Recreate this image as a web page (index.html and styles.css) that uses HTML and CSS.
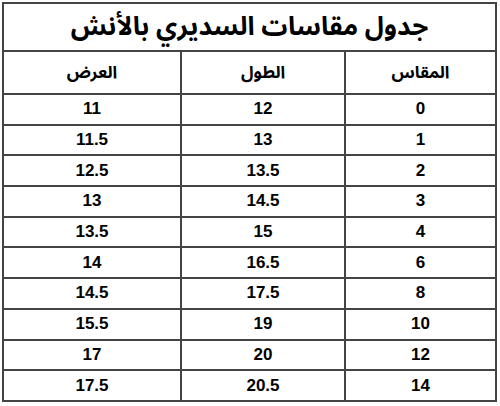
FILE: index.html
```html
<!DOCTYPE html>
<html lang="ar" dir="rtl">
<head>
<meta charset="utf-8">
<link rel="stylesheet" href="styles.css">
</head>
<body>
<table class="sizes">
  <colgroup>
    <col class="c-size">
    <col class="c-len">
    <col class="c-wid">
  </colgroup>
  <tr class="title-row"><th colspan="3">جدول مقاسات السديري بالأنش</th></tr>
  <tr class="head-row"><th>المقاس</th><th>الطول</th><th>العرض</th></tr>
  <tr><td>0</td><td>12</td><td>11</td></tr>
  <tr><td>1</td><td>13</td><td>11.5</td></tr>
  <tr><td>2</td><td>13.5</td><td>12.5</td></tr>
  <tr><td>3</td><td>14.5</td><td>13</td></tr>
  <tr><td>4</td><td>15</td><td>13.5</td></tr>
  <tr><td>6</td><td>16.5</td><td>14</td></tr>
  <tr><td>8</td><td>17.5</td><td>14.5</td></tr>
  <tr><td>10</td><td>19</td><td>15.5</td></tr>
  <tr><td>12</td><td>20</td><td>17</td></tr>
  <tr><td>14</td><td>20.5</td><td>17.5</td></tr>
</table>
</body>
</html>
```
FILE: styles.css
```css
html, body {
  margin: 0;
  padding: 0;
  background: #ffffff;
}
body {
  padding: 2px 3px 0 4px;
  font-family: "Liberation Sans", "Noto Sans Arabic", "DejaVu Sans", Arial, sans-serif;
  color: #000;
}
.sizes {
  border-collapse: collapse;
  width: 493px;
  table-layout: fixed;
}
.c-size { width: 151px; }
.c-len { width: 164px; }
.c-wid { width: 178px; }
.sizes th, .sizes td {
  border: 2px solid #444;
  text-align: center;
  font-weight: bold;
  padding: 0;
}
.title-row th {
  height: 46px;
  font-size: 26px;
  line-height: 30px;
  font-family: "Noto Sans Arabic", "DejaVu Sans", sans-serif;
}
.head-row th {
  height: 41px;
  font-size: 17px;
  line-height: 20px;
  font-family: "Noto Sans Arabic", "DejaVu Sans", sans-serif;
}
.sizes td {
  height: 28.7px;
  font-size: 17px;
  line-height: 20px;
}
```
